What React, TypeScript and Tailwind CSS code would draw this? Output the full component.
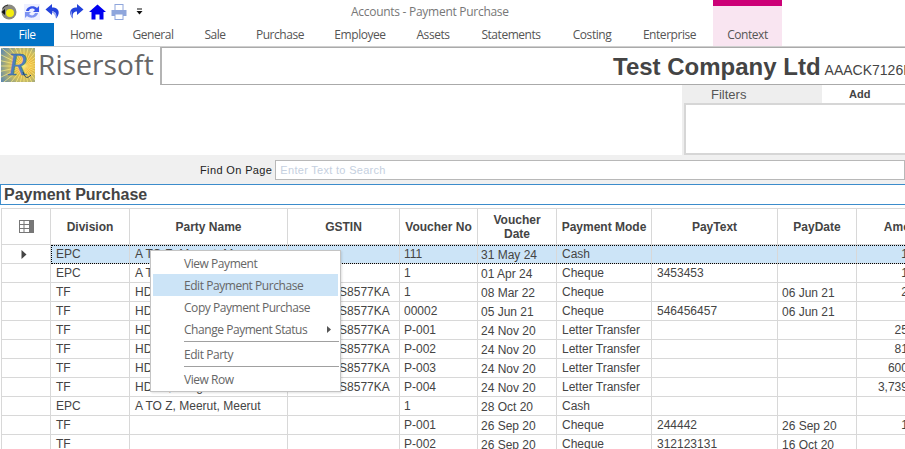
import React from "react";

const tabs: [string, string][] = [
  ["Home", "w-[64px]"],
  ["General", "w-[70px]"],
  ["Sale", "w-[54px]"],
  ["Purchase", "w-[76px]"],
  ["Employee", "w-[84px]"],
  ["Assets", "w-[62px]"],
  ["Statements", "w-[94px]"],
  ["Costing", "w-[68px]"],
  ["Enterprise", "w-[87px]"],
];

const widths = [49, 79, 158, 112, 78, 79, 95, 126, 79, 100];
const headers = ["", "Division", "Party Name", "GSTIN", "Voucher No", "Voucher Date", "Payment Mode", "PayText", "PayDate", "Amount"];
const cellPad = ["pl-[5px] pr-[4px]", "pl-[5px] pr-[4px]", "pl-[5px] pr-[4px]", "pl-[4px] pr-[4px]", "pl-[3px] pr-[4px] pt-[1px]", "pl-[5px] pr-[4px]", "pl-[5px] pr-[4px]", "pl-[4px] pr-[4px] pt-[1px]", "pl-[4px] pr-[8px] text-right"];

type Row = [string, string, string, string, string, string, string, string, string];
const rows: Row[] = [
  ["EPC", "A TO Z, Meerut, Meerut", "", "111", "31 May 24", "Cash", "", "", "1,000.00"],
  ["EPC", "A TO Z, Meerut, Meerut", "", "1", "01 Apr 24", "Cheque", "3453453", "", "1,000.00"],
  ["TF", "HDFC, Bangalore", "29AABCS8577KA", "1", "08 Mar 22", "Cheque", "", "06 Jun 21", "2,000.00"],
  ["TF", "HDFC, Bangalore", "29AABCS8577KA", "00002", "05 Jun 21", "Cheque", "546456457", "06 Jun 21", ""],
  ["TF", "HDFC, Bangalore", "29AABCS8577KA", "P-001", "24 Nov 20", "Letter Transfer", "", "", "25,000.00"],
  ["TF", "HDFC, Bangalore", "29AABCS8577KA", "P-002", "24 Nov 20", "Letter Transfer", "", "", "81,000.00"],
  ["TF", "HDFC, Bangalore", "29AABCS8577KA", "P-003", "24 Nov 20", "Letter Transfer", "", "", "600,000.00"],
  ["TF", "HDFC, Bangalore", "29AABCS8577KA", "P-004", "24 Nov 20", "Letter Transfer", "", "", "3,739,000.00"],
  ["EPC", "A TO Z, Meerut, Meerut", "", "1", "28 Oct 20", "Cash", "", "", ""],
  ["TF", "", "", "P-001", "26 Sep 20", "Cheque", "244442", "26 Sep 20", "1,000.00"],
  ["TF", "", "", "P-002", "26 Sep 20", "Cheque", "312123131", "16 Oct 20", ""],
];

function ToolIcons() {
  return (
    <div className="flex h-[23px] items-center pl-[1px]">
      <svg width="16" height="16" viewBox="0 0 16 16" className="mr-[7px]">
        <circle cx="8" cy="8" r="7.5" fill="#8a8a82" />
        <path d="M0.5 8 L4 5 L4 11 Z" fill="#111" />
        <circle cx="9" cy="9" r="4" fill="#f5ee10" />
        <path d="M1.5 4.5 A8 8 0 0 1 7 1" stroke="#333" strokeWidth="1.2" fill="none" />
      </svg>
      <svg width="16" height="16" viewBox="0 0 16 16" className="mr-[5px]">
        <rect width="16" height="16" fill="#eef0ff" />
        <path d="M2 7 C3 2 10 1 13 4 L15 2 L15 8 L9 8 L11 6 C9 4 6 4 5 7 Z" fill="#3a55e8" />
        <path d="M14 9 C13 14 6 15 3 12 L1 14 L1 8 L7 8 L5 10 C7 12 10 12 11 9 Z" fill="#7d93f2" />
      </svg>
      <svg width="16" height="17" viewBox="0 0 16 17" className="mr-[7px]">
        <path d="M7 1 L0.5 6.5 L7 12 L7 8.5 C10.5 8.5 12 10.5 11 15.5 C14.5 12.5 16 4.5 7 4.5 Z" fill="#2342dc" />
        <path d="M11 15.5 C12 11 10.5 8.5 7 8.5 L7 10 C9 10 10 12 11 15.5 Z" fill="#9aa8f0" />
      </svg>
      <svg width="16" height="17" viewBox="0 0 16 17" className="mr-[5px]">
        <path d="M9 1 L15.5 6.5 L9 12 L9 8.5 C5.5 8.5 4 10.5 5 15.5 C1.5 12.5 0 4.5 9 4.5 Z" fill="#2342dc" />
        <path d="M5 15.5 C3 13.5 2 10 4 8 C3.5 11 4 13 5 15.5 Z" fill="#9aa8f0" />
      </svg>
      <svg width="17" height="16" viewBox="0 0 17 16" className="mr-[5px]">
        <path d="M8.5 0.5 L17 8 L14.5 8 L14.5 15.5 L10.5 15.5 L10.5 10.5 L6.5 10.5 L6.5 15.5 L2.5 15.5 L2.5 8 L0 8 Z" fill="#0000f0" />
      </svg>
      <svg width="16" height="16" viewBox="0 0 16 16" className="mr-[9px]">
        <rect x="4" y="0.5" width="8" height="6" fill="#fff" stroke="#8fa6dc" />
        <rect x="0.5" y="6" width="15" height="6" fill="#8fa6dc" />
        <rect x="4" y="10" width="8" height="5.5" fill="#fff" stroke="#8fa6dc" />
      </svg>
      <svg width="7" height="7" viewBox="0 0 7 7">
        <rect x="1" y="0.5" width="5" height="1" fill="#111" />
        <path d="M0.5 3 L6.5 3 L3.5 6.5 Z" fill="#111" />
      </svg>
      <span className="ml-[208px] font-['Open_Sans',sans-serif] text-[12px] tracking-[-0.28px] text-[#777]">Accounts - Payment Purchase</span>
    </div>
  );
}

function Logo() {
  const rays = Array.from({ length: 28 }, (_, i) => (i * 360) / 28);
  return (
    <svg width="34" height="34" viewBox="0 0 34 34" className="shrink-0">
      <defs>
        <radialGradient id="sun" cx="0.68" cy="0.52" r="0.8">
          <stop offset="0" stopColor="#f07f14" />
          <stop offset="0.22" stopColor="#f6b52e" />
          <stop offset="0.55" stopColor="#c9bb62" />
          <stop offset="1" stopColor="#5f89ad" />
        </radialGradient>
      </defs>
      <rect width="34" height="34" fill="url(#sun)" />
      {rays.map((a) => (
        <line key={a} x1="23" y1="18" x2={23 + 34 * Math.cos((a * Math.PI) / 180)} y2={18 + 34 * Math.sin((a * Math.PI) / 180)} stroke="#f7e97e" strokeWidth="1" opacity="0.75" />
      ))}
      <text x="7" y="27" fontFamily="'Liberation Serif', serif" fontStyle="italic" fontSize="31" fill="#4d7fbd" stroke="#2f5d96" strokeWidth="0.3">R</text>
      <path d="M22 24 C24 30 26 31 30 27" stroke="#24405f" strokeWidth="1" fill="none" />
    </svg>
  );
}

function MenuItem({ label, active, arrow }: { label: string; active?: boolean; arrow?: boolean }) {
  return (
    <div className={`relative flex h-[22px] items-center pl-[31px] pt-[1px] ${active ? "bg-[#cce4f7]" : ""}`}>
      <span>{label}</span>
      {arrow && (
        <svg width="4" height="7" viewBox="0 0 4 7" className="absolute right-[7px] top-[8px]">
          <path d="M0 0 L4 3.5 L0 7 Z" fill="#555" />
        </svg>
      )}
    </div>
  );
}

export default function App() {
  return (
    <div className="relative h-[449px] w-[905px] overflow-hidden bg-white font-['Liberation_Sans',sans-serif] text-[#444]">
      <ToolIcons />
      <div className="relative flex h-[23px] items-stretch font-['Open_Sans',sans-serif] text-[12px] tracking-[-0.45px] text-[#555]">
        <div className="flex w-[54px] items-center justify-center bg-[#0072c6] text-white">File</div>
        {tabs.map(([t, w]) => (
          <div key={t} className={`flex items-center justify-center ${w}`}>{t}</div>
        ))}
        <div className="flex w-[69px] items-center justify-center bg-[#f9e5f1]">Context</div>
        <div className="absolute left-[713px] top-[-23px] h-[6px] w-[69px] bg-[#cc0077]" />
        <div className="absolute left-[713px] top-[-17px] h-[17px] w-[69px] bg-[#f9e5f1]" />
      </div>

      <div className="flex h-[39px] border-t border-[#cfcfcf]">
        <div className="flex h-[36px] w-[160px] shrink-0 items-start pl-[1px] pt-[1px]">
          <Logo />
          <span className="ml-[3px] font-['Open_Sans',sans-serif] text-[28px] leading-[33px] tracking-[0.15px] text-[#666]">Risersoft</span>
        </div>
        <div className="flex h-[38px] min-w-0 flex-1 items-center overflow-hidden whitespace-nowrap border-y border-t-[#aaaaaa] border-b-[#aaaaaa] border-l-2 border-l-[#b4b4b4] pl-[451px] pt-[2px]">
          <span className="text-[24px] font-bold leading-[36px] text-[#444]">Test Company Ltd</span>
          <span className="ml-[4px] mt-[6px] text-[14px] text-[#444]">AAACK7126M</span>
        </div>
      </div>

      <div className="flex h-[70px]">
        <div className="w-[682px]" />
        <div className="flex flex-1 flex-col bg-[#eeeeee] pl-[2px]">
          <div className="flex h-[18px] shrink-0">
            <div className="flex w-[138px] items-center pl-[27px] pt-[1px] text-[13px] text-[#555]">Filters</div>
            <div className="flex flex-1 items-center bg-white pl-[27px] text-[11px] font-bold text-[#444]">Add</div>
          </div>
          <div className="h-[52px] border-2 border-r-0 border-[#d6d6d6] bg-white" />
        </div>
      </div>

      <div className="flex h-[29px] items-center bg-[#f0f0f0] pl-[200px]">
        <span className="pt-[2px] text-[11px] tracking-[0.37px] text-[#222]">Find On Page</span>
        <div className="ml-[3px] flex h-[20px] flex-1 items-center border border-[#b8b8b8] bg-white pl-[4px] pt-[2px] text-[11px] tracking-[0.3px] text-[#c5d0e0]">Enter Text to Search</div>
      </div>

      <div className="flex h-[21px] items-center border-y border-l border-[#3c8ccb] pl-[3px] text-[16px] font-bold text-[#444]">Payment Purchase</div>

      <div className="mt-[3px] pl-[1px] text-[12px]">
        <table className="table-fixed border-collapse" style={{ width: widths.reduce((a, b) => a + b, 0) }}>
          <colgroup>
            {widths.map((w, i) => <col key={i} style={{ width: w }} />)}
          </colgroup>
          <thead>
            <tr className="h-[36px]">
              {headers.map((h, i) => (
                <th key={i} className="overflow-hidden border border-[#d8d8d8] px-[2px] text-center text-[12px] font-bold leading-[14px] text-[#444]">
                  {i === 0 ? (
                    <svg width="15" height="13" viewBox="0 0 15 13" className="mx-auto">
                      <rect x="0.5" y="0.5" width="14" height="12" fill="none" stroke="#777" />
                      <rect x="10" y="0.5" width="4.5" height="12" fill="#777" />
                      <path d="M0.5 4.5 H10 M0.5 8.5 H10 M5 0.5 V12.5" stroke="#777" />
                    </svg>
                  ) : h}
                </th>
              ))}
            </tr>
          </thead>
          <tbody>
            {rows.map((r, ri) => (
              <tr key={ri} className={`h-[19px] ${ri === 0 ? "bg-[#cce4f7]" : ""}`}>
                <td className="border border-[#d8d8d8] bg-white p-0">
                  {ri === 0 && (
                    <svg width="6" height="9" viewBox="0 0 6 9" className="mx-auto -translate-x-[2px]">
                      <path d="M0.5 0 L5.5 4.5 L0.5 9 Z" fill="#444" />
                    </svg>
                  )}
                </td>
                {r.map((c, ci) => (
                  <td key={ci} className={`overflow-hidden whitespace-nowrap border border-[#d8d8d8] py-0 leading-[16px] text-[#444] ${cellPad[ci]}`}>
                    {c}
                  </td>
                ))}
              </tr>
            ))}
          </tbody>
        </table>
      </div>

      <div className="absolute left-[51px] top-[245px] h-[19px] w-[870px] border border-dotted border-black" />

      <div className="absolute left-[150px] top-[250px] h-[142px] w-[191px] border border-[#c4c4c4] bg-white px-[1px] pt-[1px] font-['Open_Sans',sans-serif] text-[12px] tracking-[-0.45px] text-[#666] shadow-[1px_1px_2px_rgba(0,0,0,0.12)]">
        <div className="px-[1px]">
          <MenuItem label="View Payment" />
          <MenuItem label="Edit Payment Purchase" active />
          <MenuItem label="Copy Payment Purchase" />
          <MenuItem label="Change Payment Status" arrow />
          <div className="-mr-[1px] ml-[31px] mt-[1px] h-px bg-[#a0a0a0]" />
          <div className="mt-[1px]"><MenuItem label="Edit Party" /></div>
          <div className="-mr-[1px] ml-[31px] mt-[1px] h-px bg-[#a0a0a0]" />
          <div className="mt-[1px]"><MenuItem label="View Row" /></div>
        </div>
      </div>
    </div>
  );
}
